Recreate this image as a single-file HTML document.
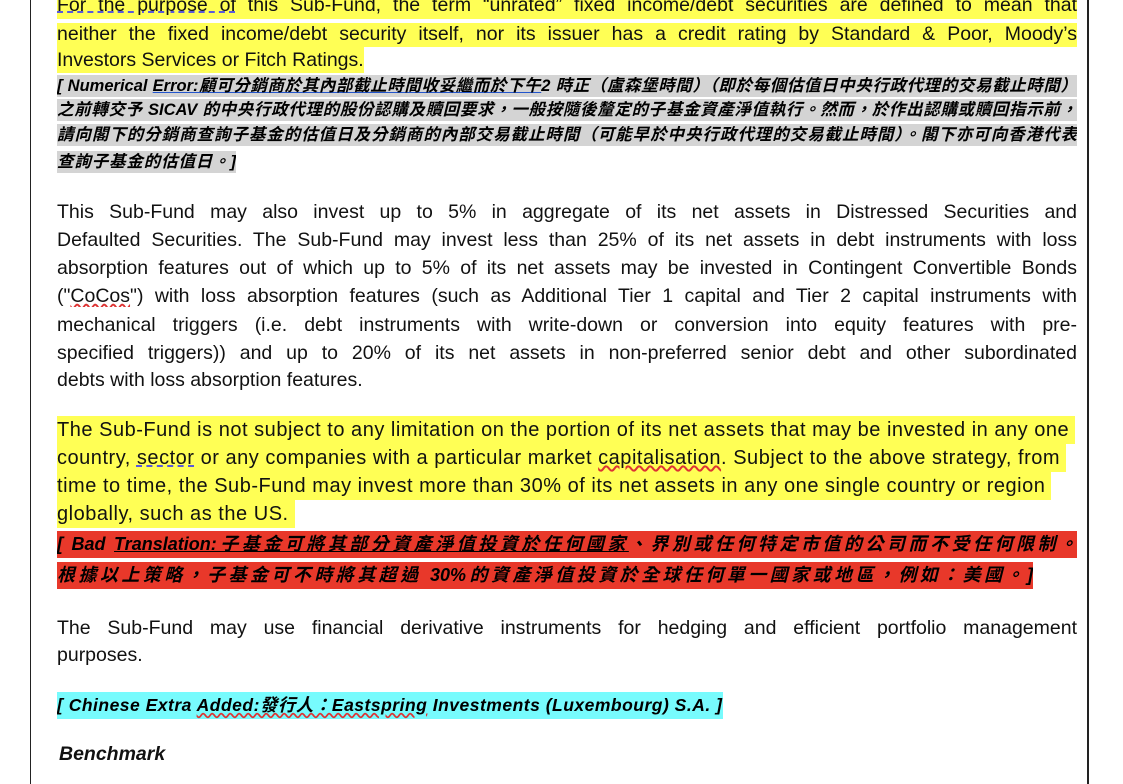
<!DOCTYPE html>
<html><head><meta charset="utf-8"><style>
body{margin:0;width:1123px;height:784px;background:#fff;position:relative;overflow:hidden;font-family:"Liberation Sans",Arial,sans-serif;color:#111}
.bl{position:absolute;left:30px;top:0;width:1px;height:784px;background:#222}
.br{position:absolute;left:1087px;top:0;width:2px;height:784px;background:#222}
.l{position:absolute;left:57px;width:1020px;font-size:19.5px;line-height:22px;white-space:nowrap}
.j{text-align:justify;text-align-last:justify;white-space:normal;height:22px;overflow:hidden}
.y{background:#ffff55}
.z{font-family:"Liberation Sans","Noto Sans CJK TC",sans-serif;font-style:italic;font-weight:bold;font-size:16.5px;line-height:22px;position:absolute;left:57px;white-space:nowrap;overflow:hidden;color:#000}
.g{background:#d4d4d4}
.r{background:#e8382a}
.c{background:#77fbfd}
.u{text-decoration:underline}
.p3{font-size:20px;letter-spacing:0.52px}
</style></head><body>
<div class="bl"></div><div class="br"></div>

<div class="l j y" style="top:-6px;height:25px;line-height:22px"><span style="text-decoration:underline dashed #5a5adc">For the purpose of</span> this Sub-Fund, the term “unrated” fixed income/debt securities are defined to mean that</div>
<div class="l j y" style="top:23px;height:24px">neither the fixed income/debt security itself, nor its issuer has a credit rating by Standard &amp; Poor, Moody’s</div>
<div class="l" style="top:49px;width:auto;padding-right:2px" ><span class="y" style="padding:2px 0">Investors Services or Fitch Ratings.</span></div>

<div class="z g" style="top:75px;width:1020px;text-align:justify;text-align-last:justify">[ Numerical <span style="text-decoration:underline #2255cc">Error:顧可分銷商於其內部截止時間收妥繼而於下午</span>2 時正（盧森堡時間）（即於每個估值日中央行政代理的交易截止時間）</div>
<div class="z g" style="top:99px;width:1020px;text-align:justify;text-align-last:justify">之前轉交予 SICAV 的中央行政代理的股份認購及贖回要求，一般按隨後釐定的子基金資產淨值執行。然而，於作出認購或贖回指示前，</div>
<div class="z g" style="top:124px;width:1020px;text-align:justify;text-align-last:justify">請向閣下的分銷商查詢子基金的估值日及分銷商的內部交易截止時間（可能早於中央行政代理的交易截止時間）。閣下亦可向香港代表</div>
<div class="z g" style="top:151px;width:179px;text-align:justify;text-align-last:justify">查詢子基金的估值日。]</div>

<div class="l j" style="top:201px">This Sub-Fund may also invest up to 5% in aggregate of its net assets in Distressed Securities and</div>
<div class="l j" style="top:229px">Defaulted Securities. The Sub-Fund may invest less than 25% of its net assets in debt instruments with loss</div>
<div class="l j" style="top:257px">absorption features out of which up to 5% of its net assets may be invested in Contingent Convertible Bonds</div>
<div class="l j" style="top:285px">("<span style="text-decoration:underline wavy #d33">CoCos</span>") with loss absorption features (such as Additional Tier 1 capital and Tier 2 capital instruments with</div>
<div class="l j" style="top:314px">mechanical triggers (i.e. debt instruments with write-down or conversion into equity features with pre-</div>
<div class="l j" style="top:342px">specified triggers)) and up to 20% of its net assets in non-preferred senior debt and other subordinated</div>
<div class="l" style="top:369px">debts with loss absorption features.</div>

<div class="l p3" style="top:419px"><span class="y" style="padding:3px 6px 3px 0">The Sub-Fund is not subject to any limitation on the portion of its net assets that may be invested in any one</span></div>
<div class="l p3" style="top:447px"><span class="y" style="padding:3px 6px 3px 0">country, <span style="text-decoration:underline dashed #5a5adc">sector</span> or any companies with a particular market <span style="text-decoration:underline wavy #d33">capitalisation</span>. Subject to the above strategy, from</span></div>
<div class="l p3" style="top:475px"><span class="y" style="padding:3px 6px 3px 0">time to time, the Sub-Fund may invest more than 30% of its net assets in any one single country or region</span></div>
<div class="l p3" style="top:503px"><span class="y" style="padding:3px 6px 3px 0">globally, such as the US.</span></div>

<div class="z r" style="top:531px;width:1020px;height:27px;line-height:27px;font-size:18px;text-align:justify;text-align-last:justify">[ Bad <span class="u">Translation:子基金可將其部分資產淨值投資於任何國家</span>、界別或任何特定市值的公司而不受任何限制。</div>
<div class="z r" style="top:562px;width:976px;height:27px;line-height:27px;font-size:18px;text-align:justify;text-align-last:justify">根據以上策略，子基金可不時將其超過 30%的資產淨值投資於全球任何單一國家或地區，例如：美國。]</div>

<div class="l j" style="top:617px">The Sub-Fund may use financial derivative instruments for hedging and efficient portfolio management</div>
<div class="l" style="top:644px">purposes.</div>

<div class="z c" style="top:692px;height:27px;line-height:27px;width:666px;font-size:17.5px;letter-spacing:0.5px">[ Chinese Extra <span style="text-decoration:underline wavy #d33">Added:發行人：Eastspring</span> Investments (Luxembourg) S.A. ]</div>

<div class="l" style="top:743px;left:59px;font-weight:bold;font-style:italic">Benchmark</div>
</body></html>
